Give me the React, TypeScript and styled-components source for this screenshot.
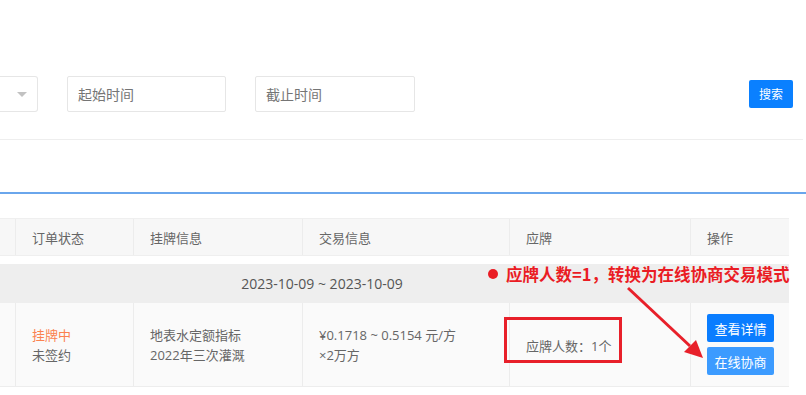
import React from "react";
import styled, { createGlobalStyle } from "styled-components";

const Global = createGlobalStyle`
  html, body { margin: 0; padding: 0; background: #fff; }
  body { font-family: "Open Sans", "Noto Sans CJK SC", sans-serif; overflow: hidden; }
  * { box-sizing: border-box; }
`;

const Page = styled.div`
  position: relative;
  width: 806px;
  height: 395px;
  overflow: hidden;
`;

const FilterBar = styled.div`
  display: flex;
  align-items: center;
  padding-top: 76px;
  height: 112px;
  padding-right: 13px;
`;

const SelectBox = styled.div`
  width: 38px;
  height: 36px;
  border: 1px solid #e6e6e6;
  border-left: none;
  border-radius: 0 3px 3px 0;
  display: flex;
  align-items: center;
  justify-content: flex-end;
  padding-right: 10px;
`;

const Caret = styled.div`
  width: 0;
  height: 0;
  border-left: 5px solid transparent;
  border-right: 5px solid transparent;
  border-top: 5px solid #c2c2c2;
`;

const Input = styled.div<{ $w: number }>`
  width: ${(p) => p.$w}px;
  height: 36px;
  margin-left: 29px;
  border: 1px solid #e6e6e6;
  border-radius: 2px;
  padding-left: 10px;
  display: flex;
  align-items: center;
  font-size: 14px;
  color: #757575;
`;

const Spacer = styled.div`
  flex: 1;
`;

const SearchButton = styled.div`
  width: 44px;
  height: 28px;
  background: #0a80ff;
  color: #fff;
  border-radius: 2px;
  font-size: 12px;
  display: flex;
  align-items: center;
  justify-content: center;
`;

const Divider = styled.div`
  margin-top: 27px;
  width: 803px;
  height: 1px;
  background: #eeeeee;
`;

const TabBar = styled.div`
  height: 52px;
`;

const TabLine = styled.div`
  height: 2px;
  background: #6aa6ec;
`;

const Table = styled.div`
  margin-top: 24px;
  width: 789px;
  font-size: 13px;
  color: #666;
`;

const Cols = `16px 118px 169px 207px 181px 98px`;

const HeadRow = styled.div`
  display: grid;
  grid-template-columns: ${Cols};
  height: 38px;
  background: #f7f7f7;
  border-top: 1px solid #efefef;
  border-bottom: 1px solid #efefef;
`;

const HeadCell = styled.div`
  display: flex;
  align-items: center;
  padding-left: 16px;
  border-right: 1px solid #ececec;
  &:first-child { padding-left: 0; }
  &:last-child { border-right: none; }
`;

const DateRow = styled.div`
  margin-top: 8px;
  height: 39px;
  background: #eeeeee;
  display: flex;
  align-items: center;
  justify-content: center;
  padding-right: 145px;
  font-size: 14px;
  color: #555;
`;

const DataRow = styled.div`
  display: grid;
  grid-template-columns: ${Cols};
  height: 84px;
  background: #fafafa;
  border-bottom: 1px solid #ededed;
`;

const DataCell = styled.div`
  display: flex;
  flex-direction: column;
  justify-content: center;
  padding-left: 16px;
  line-height: 20px;
  border-right: 1px solid #ececec;
  &:first-child { padding-left: 0; }
  &:last-child { border-right: none; }
`;

const StatusHot = styled.span`
  color: #fb8250;
`;

const ApplyText = styled.span`
  padding-top: 2px;
`;

const ActionCell = styled.div`
  display: flex;
  flex-direction: column;
  justify-content: center;
  gap: 5px;
  padding-left: 16px;
`;

const ActionButton = styled.div<{ $light?: boolean }>`
  width: 67px;
  height: 28px;
  border-radius: 2px;
  background: ${(p) => (p.$light ? "#3c9bff" : "#0a7dff")};
  color: #fff;
  font-size: 13px;
  display: flex;
  align-items: center;
  justify-content: center;
`;

const Note = styled.div`
  position: absolute;
  left: 488px;
  top: 262px;
  display: flex;
  align-items: center;
  gap: 8px;
  color: #ea1c24;
  font-family: "Noto Sans CJK SC", sans-serif;
  font-weight: 700;
  font-size: 16.5px;
  line-height: 24px;
  white-space: nowrap;
`;

const Dot = styled.span`
  width: 10px;
  height: 10px;
  border-radius: 50%;
  background: #ea1c24;
`;

const Highlight = styled.div`
  position: absolute;
  left: 504px;
  top: 317px;
  width: 118px;
  height: 46px;
  border: 3px solid #e8202a;
`;

const Arrow = styled.svg`
  position: absolute;
  left: 0;
  top: 0;
  pointer-events: none;
`;

export default function App() {
  return (
    <Page>
      <Global />
      <FilterBar>
        <SelectBox>
          <Caret />
        </SelectBox>
        <Input $w={159}>起始时间</Input>
        <Input $w={160}>截止时间</Input>
        <Spacer />
        <SearchButton>搜索</SearchButton>
      </FilterBar>
      <Divider />
      <TabBar />
      <TabLine />
      <Table>
        <HeadRow>
          <HeadCell />
          <HeadCell>订单状态</HeadCell>
          <HeadCell>挂牌信息</HeadCell>
          <HeadCell>交易信息</HeadCell>
          <HeadCell>应牌</HeadCell>
          <HeadCell>操作</HeadCell>
        </HeadRow>
        <DateRow>2023-10-09 ~ 2023-10-09</DateRow>
        <DataRow>
          <DataCell />
          <DataCell>
            <StatusHot>挂牌中</StatusHot>
            <span>未签约</span>
          </DataCell>
          <DataCell>
            <span>地表水定额指标</span>
            <span>2022年三次灌溉</span>
          </DataCell>
          <DataCell>
            <span>¥0.1718 ~ 0.5154 元/方</span>
            <span>×2万方</span>
          </DataCell>
          <DataCell>
            <ApplyText>应牌人数：1个</ApplyText>
          </DataCell>
          <ActionCell>
            <ActionButton>查看详情</ActionButton>
            <ActionButton $light>在线协商</ActionButton>
          </ActionCell>
        </DataRow>
      </Table>
      <Note>
        <Dot />
        应牌人数=1，转换为在线协商交易模式
      </Note>
      <Highlight />
      <Arrow width="806" height="395" viewBox="0 0 806 395">
        <line x1="628" y1="288" x2="690" y2="346" stroke="#e8202a" strokeWidth="3" />
        <polygon points="703,358 684,352 696,340" fill="#e8202a" />
      </Arrow>
    </Page>
  );
}
